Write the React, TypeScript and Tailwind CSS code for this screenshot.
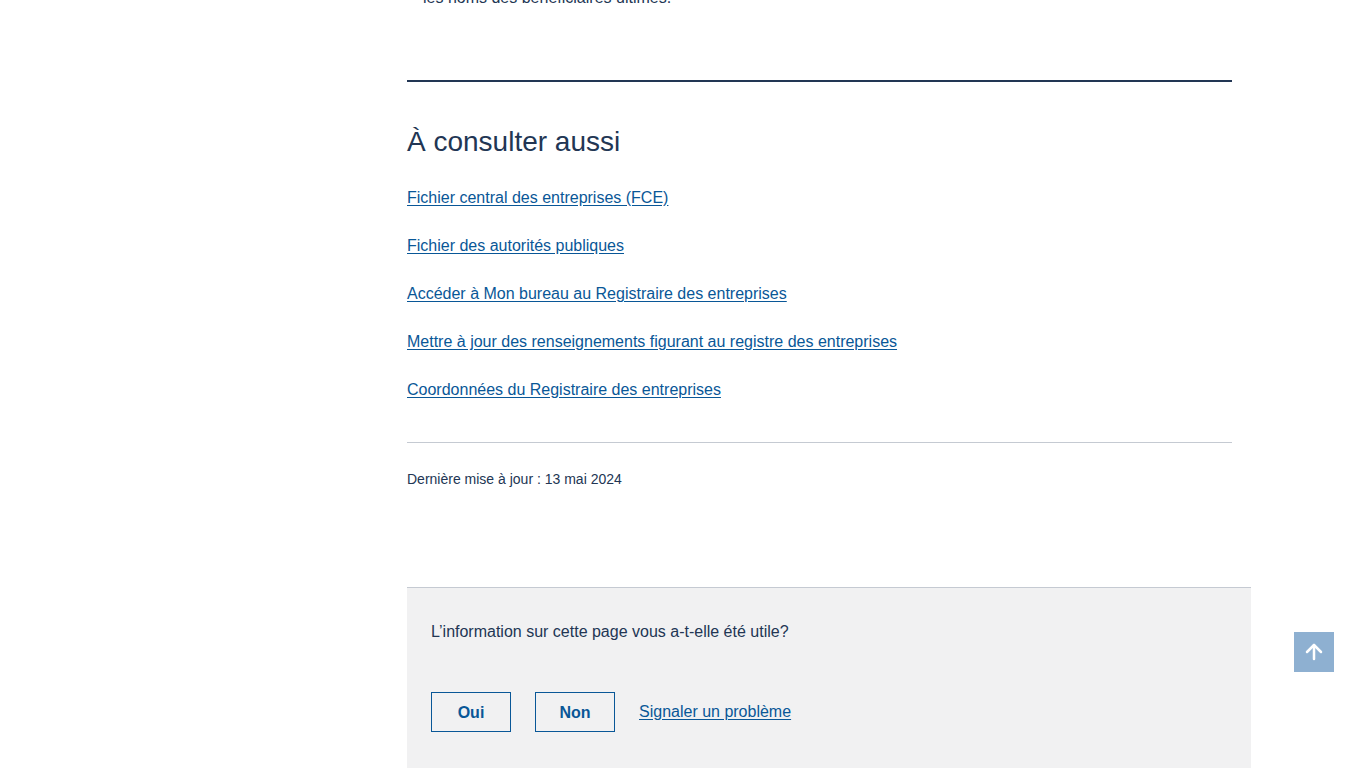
import React from 'react';
import { ArrowUp } from 'lucide-react';

const links = [
  'Fichier central des entreprises (FCE)',
  'Fichier des autorités publiques',
  'Accéder à Mon bureau au Registraire des entreprises',
  'Mettre à jour des renseignements figurant au registre des entreprises',
  'Coordonnées du Registraire des entreprises',
];

const App = () => {
  return (
    <div className="min-h-screen bg-white text-[#223654] overflow-hidden" style={{ fontFamily: '"Liberation Sans", Arial, sans-serif' }}>
      <div className="ml-[407px] w-[825px]">
        {/* end of the previous list, cut by the scroll */}
        <ul className="-mt-[14px]">
          <li className="flex text-base leading-6">
            <span className="w-4 pl-[2px]">•</span>
            <span>les noms des bénéficiaires ultimes.</span>
          </li>
        </ul>

        <div className="mt-[70px] h-[2px] bg-[#223654]" />

        <h2 className="mt-[43px] text-[28px] leading-[34px] font-normal">À consulter aussi</h2>

        <ul className="mt-[27px] flex flex-col gap-6">
          {links.map((l) => (
            <li key={l} className="text-base leading-6">
              <a href="#" className="text-[#095797] underline underline-offset-2">{l}</a>
            </li>
          ))}
        </ul>

        <div className="mt-[40px] h-px bg-[#c5cad2]" />

        <p className="mt-[26px] text-sm leading-5">Dernière mise à jour : 13 mai 2024</p>
      </div>

      {/* Feedback */}
      <div className="ml-[407px] mt-[98px] w-[844px] h-[200px] border-t border-[#c5cad2] bg-[#f1f1f2] pl-6 pt-8">
        <p className="text-base leading-6">L’information sur cette page vous a-t-elle été utile?</p>
        <div className="mt-12 flex items-center gap-6">
          <button className="w-20 h-10 pt-0.5 border border-[#095797] text-[#095797] font-bold text-base">Oui</button>
          <button className="w-20 h-10 pt-0.5 border border-[#095797] text-[#095797] font-bold text-base">Non</button>
          <a href="#" className="text-[#095797] underline underline-offset-2 text-base">Signaler un problème</a>
        </div>
      </div>

      <button className="fixed right-8 bottom-24 w-10 h-10 bg-[#8eb0d1] flex items-center justify-center">
        <ArrowUp className="w-6 h-6 text-white" strokeWidth={2.5} />
      </button>
    </div>
  );
};

export default App;
